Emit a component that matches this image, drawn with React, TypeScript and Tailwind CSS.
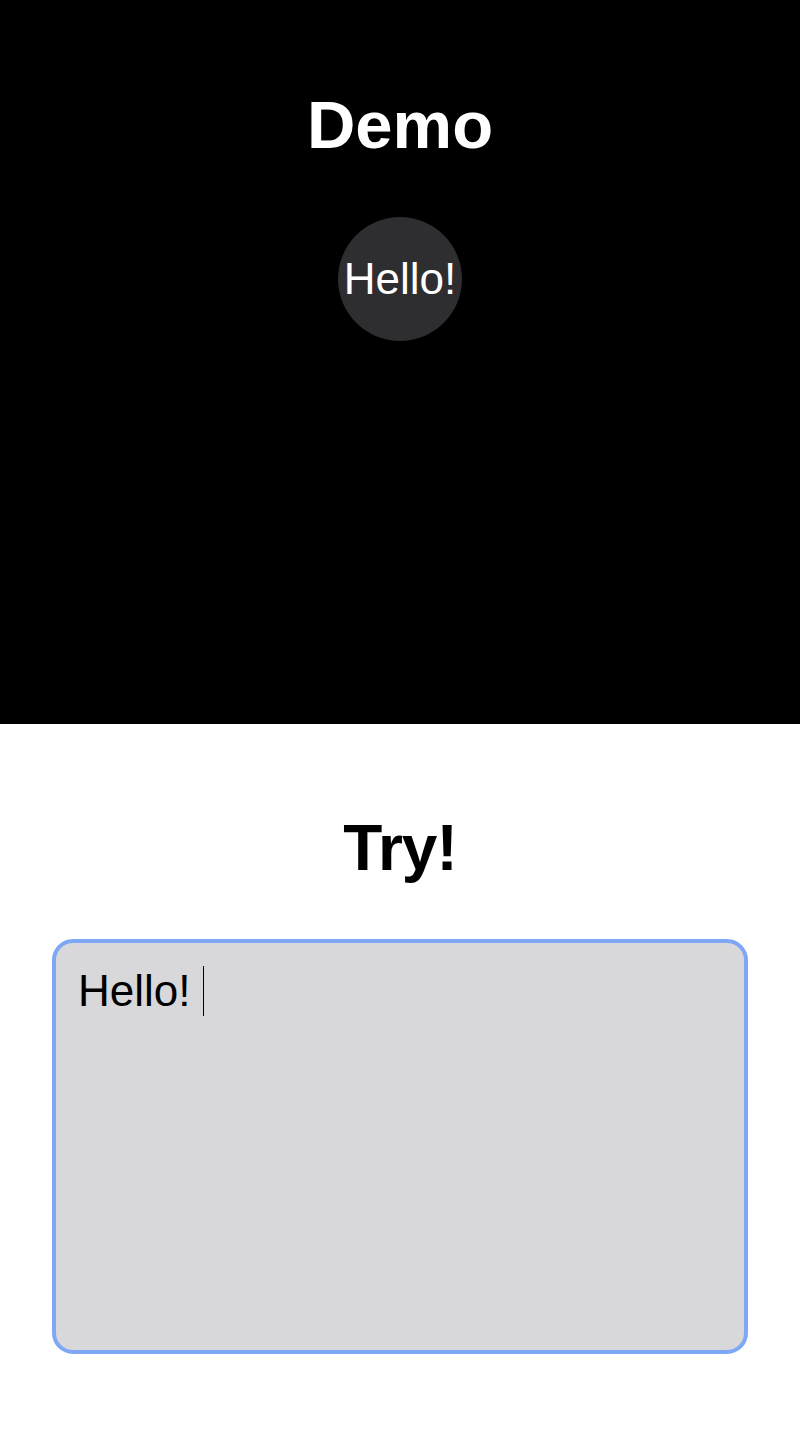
export default function App() {
  const font = { fontFamily: '"Liberation Sans", Arial, Helvetica, sans-serif' };
  return (
    <div className="w-[800px] min-h-[1448px] bg-white" style={font}>
      <section className="h-[724px] bg-black flex flex-col items-center pt-[92px]">
        <h1 className="text-[67px] leading-[66px] font-bold text-white">Demo</h1>
        <div className="mt-[59px] w-[124px] h-[124px] rounded-full bg-[#2e2d30] flex items-center justify-center">
          <span className="text-[44px] leading-[44px] text-white">Hello!</span>
        </div>
      </section>
      <section className="flex flex-col items-center pt-[92px] px-[52px] pb-[94px]">
        <h2 className="text-[64px] leading-[64px] font-bold text-black tracking-[-1px]">Try!</h2>
        <div className="mt-[59px] w-full h-[415px] rounded-[21px] border-[4px] border-[#7ea8f5] bg-[#d8d7d9] pl-[22px] pt-[23px]">
          <div className="flex items-center h-[50px]">
            <span className="text-[44px] leading-[50px] text-black">Hello!</span>
            <span className="ml-[12px] w-px h-[50px] bg-black" />
          </div>
        </div>
      </section>
    </div>
  );
}
